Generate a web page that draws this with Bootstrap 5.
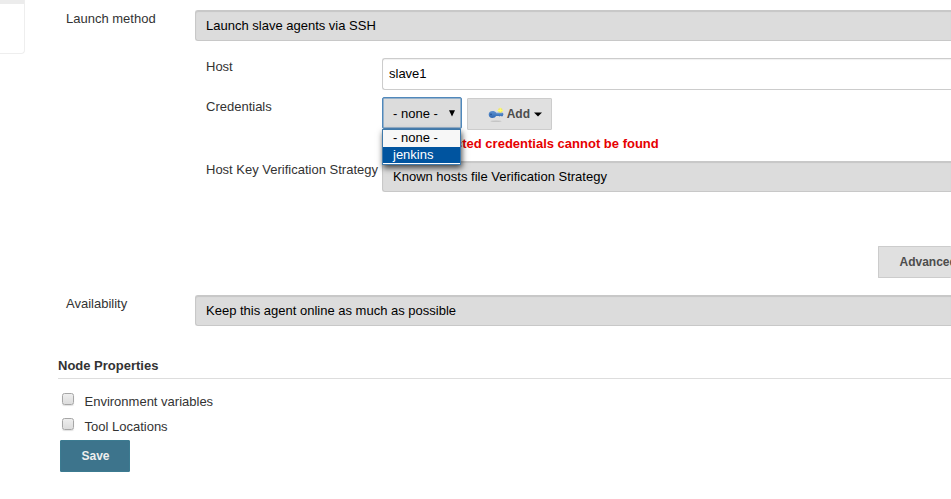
<!DOCTYPE html>
<html lang="en">
<head>
<meta charset="utf-8">
<meta name="viewport" content="width=device-width, initial-scale=1">
<title>Node configuration</title>
<link href="https://cdn.jsdelivr.net/npm/bootstrap@5.3.0/dist/css/bootstrap.min.css" rel="stylesheet">
<style>
body{font:13px/16px "Liberation Sans",Arial,sans-serif;color:#333;background:#fff;height:499px}
.side-box{width:25px;height:54px;border:1px solid #eee;border-width:0 1px 1px 0;border-radius:0 0 4px 0}
.side-head{height:4px;background:#ececec}
.config{width:893px;margin-left:33px;padding-top:10px}
.field{padding-left:8px}
.field-name{width:129px;padding-top:1px}
.sub-name{width:176px;white-space:nowrap;padding-top:1px}
.picker{height:31px;border:1px solid #c8c8c8;border-radius:3px;background:#dcdcdc;box-shadow:inset 0 1px 1px rgba(0,0,0,.1);color:#000;padding:0 10px}
.entry{min-width:0;height:32px;border:1px solid #ccc;border-radius:3px;font-size:13px;padding:0 6px 1px;color:#000;box-shadow:inset 0 1px 1px rgba(0,0,0,.06)}
.picker.open-end,.entry.open-end{border-right:0;border-top-right-radius:0;border-bottom-right-radius:0}
.nested{padding-left:148px}
.row-host{height:40px;margin-top:17px}
.row-cred{height:63px}
.row-key{height:31px}
.cred{width:80px;height:32px;border-color:#5088bb;border-radius:2px;padding:1px 6px 0 10px;margin-top:-1px;box-shadow:inset 0 0 0 .5px #5088bb}
.options{left:0;top:31px;width:79px;z-index:5;background:#f7f7f7;border:1px solid #3f79aa;color:#000;box-shadow:1px 3px 6px rgba(0,0,0,.7)}
.options div{height:17px;padding-left:10px;line-height:15px}
.options .chosen{background:#00549f;color:#fff;height:16px;line-height:16px}
.options .tail{height:1px;padding:0;background:#fff}
.grey-btn{height:32px;background:#e0e0e0;border:1px solid #ccc;border-radius:1px;color:#4d4d4d;font-size:12px;font-weight:700;line-height:16px;padding:0}
.add-btn{width:85px;margin-left:5px}
.add-text{margin-left:2px}
.fault{color:#e60000;height:16px;margin-top:6px;padding-left:21px}
.adv-btn{width:73px;border-right:0;margin-left:820px;margin-top:54px;padding-left:20.5px;text-align:left;overflow:hidden}
.avail{margin-top:17px}
.heading{margin-top:32px;height:21px;border-bottom:1px solid #ddd;font-size:13px;line-height:16px;font-weight:700;color:#333}
.prop{height:25px;padding-left:4px}
.props{padding-top:11px}
.tick{appearance:none;width:12px;height:12px;border:1px solid #a6a6a6;border-radius:2.5px;background:linear-gradient(#eee,#dcdcdc);box-shadow:0 1px 1px rgba(0,0,0,.12);margin:3px 10.5px 0 0}
.save-btn{width:70px;height:32px;margin:0 0 0 2px;background:#3d748c;border:1px solid #3c7b91;border-radius:1px;color:#eee;font-size:12px;font-weight:700;padding:0 0 0 1px;line-height:16px}
</style>
<script src="https://cdn.jsdelivr.net/npm/bootstrap@5.3.0/dist/js/bootstrap.bundle.min.js"></script>
</head>
<body class="overflow-hidden d-flex align-items-start">
<aside class="side-box flex-shrink-0"><div class="side-head"></div></aside>
<main class="config flex-shrink-0">
  <div class="field d-flex">
    <label class="field-name flex-shrink-0">Launch method</label>
    <div class="picker open-end d-flex align-items-center flex-grow-1">Launch slave agents via SSH</div>
  </div>
  <div class="nested">
    <div class="row-host d-flex">
      <label class="sub-name flex-shrink-0" for="host">Host</label>
      <input id="host" class="entry open-end flex-grow-1" type="text" value="slave1">
    </div>
    <div class="row-cred d-flex">
      <label class="sub-name flex-shrink-0">Credentials</label>
      <div class="flex-grow-1">
        <div class="d-flex">
          <div class="position-relative">
            <div class="picker cred d-flex align-items-center justify-content-between">
              <span>- none -</span>
              <svg width="6" height="7" viewBox="0 0 6 7"><path d="M0 .3h6L3 6.5z" fill="#000"/></svg>
            </div>
            <div class="options position-absolute">
              <div>- none -</div>
              <div class="chosen">jenkins</div>
              <div class="tail"></div>
            </div>
          </div>
          <button type="button" class="btn grey-btn add-btn d-flex align-items-center justify-content-end">
            <svg class="flex-shrink-0" width="17" height="16" viewBox="0 0 17 16">
              <defs>
                <linearGradient id="steel" x2="0" y2="1"><stop stop-color="#5f93d0"/><stop offset="1" stop-color="#2f68b2"/></linearGradient>
              </defs>
              <ellipse cx="8" cy="15.200" rx="5.500" ry=".7" fill="#aaa" opacity=".5"/>
              <circle cx="12.300" cy="4.500" r="2.400" fill="#f4e84d" opacity=".75"/>
              <path d="M12.300 1.700v5.500M9.500 4.500h5.600" stroke="#ffff70" stroke-width="1"/>
              <path d="M4.300 5c2 0 3.300.7 3.900 1.700h6.500l.8 1.300-.8 2.200h-1.700l-.5-.4-.7.700-1-.5-2.700.1c-.600 1.200-1.900 1.900-3.800 1.900C2.200 12 .700 10.500.700 8.500S2.200 5 4.300 5z" fill="url(#steel)"/>
              <circle cx="3" cy="8.400" r=".8" fill="#24508f"/>
              <path d="M8.300 7.700h6" stroke="#7ea8d8" stroke-width=".6"/>
            </svg>
            <span class="add-text">Add</span>
            <svg class="ms-1" width="17" height="5" viewBox="0 0 17 5"><path d="M0 .5h8L4 4.500z" fill="#000"/></svg>
          </button>
        </div>
        <div class="fault fw-bold text-nowrap">The selected credentials cannot be found</div>
      </div>
    </div>
    <div class="row-key d-flex">
      <label class="sub-name flex-shrink-0">Host Key Verification Strategy</label>
      <div class="picker open-end d-flex align-items-center flex-grow-1">Known hosts file Verification Strategy</div>
    </div>
  </div>
  <button type="button" class="btn grey-btn adv-btn d-block text-nowrap">Advanced...</button>
  <div class="field avail d-flex">
    <label class="field-name flex-shrink-0">Availability</label>
    <div class="picker open-end d-flex align-items-center flex-grow-1">Keep this agent online as much as possible</div>
  </div>
  <h2 class="heading mb-0">Node Properties</h2>
  <div class="props">
    <label class="prop d-flex align-items-start"><input class="tick" type="checkbox"><span class="pt-1">Environment variables</span></label>
    <label class="prop d-flex align-items-start"><input class="tick" type="checkbox"><span class="pt-1">Tool Locations</span></label>
  </div>
  <button type="button" class="btn save-btn d-block">Save</button>
</main>
</body>
</html>
